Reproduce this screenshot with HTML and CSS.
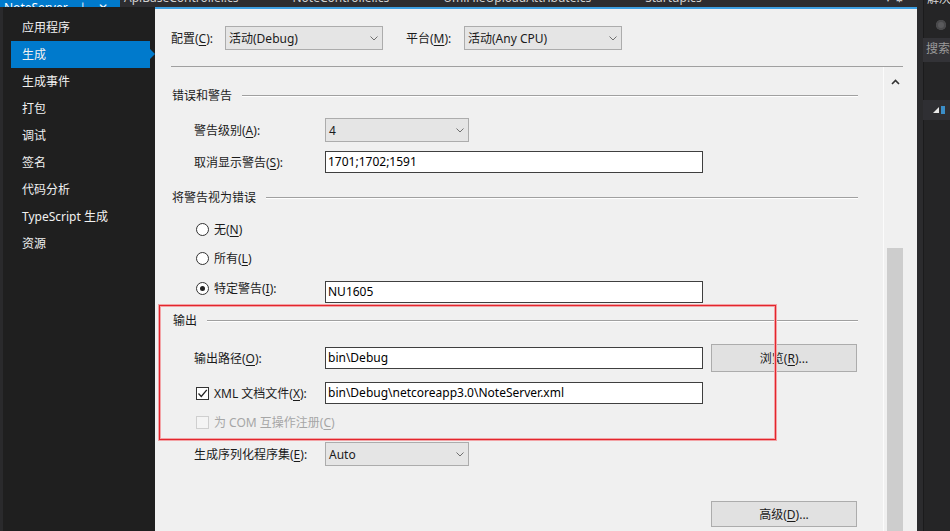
FILE: index.html
```html
<!DOCTYPE html>
<html lang="zh-CN">
<head>
  <meta charset="UTF-8">
  <title>NoteServer - 生成</title>
  <link rel="stylesheet" href="styles.css">
</head>
<body>
  <div class="ide">
    <div class="editor">
      <div class="tabs">
        <div class="tab tab-active">NoteServer <span class="tab-btn">⊥</span> <span class="tab-btn">✕</span></div>
        <div class="tab">ApiBaseController.cs</div>
        <div class="tab">NoteController.cs</div>
        <div class="tab">UmlFileUploadAttribute.cs</div>
        <div class="tab">Startup.cs</div>
        <div class="tab-tools">▾ ⚙</div>
      </div>

      <div class="doc">
        <nav class="sidebar">
          <div class="nav-item">应用程序</div>
          <div class="nav-item active">生成</div>
          <div class="nav-item">生成事件</div>
          <div class="nav-item">打包</div>
          <div class="nav-item">调试</div>
          <div class="nav-item">签名</div>
          <div class="nav-item">代码分析</div>
          <div class="nav-item">TypeScript 生成</div>
          <div class="nav-item">资源</div>
        </nav>

        <main class="props">
          <div class="config-bar">
            <span class="config-label">配置(<u>C</u>):</span>
            <div class="select wide">
              <span>活动(Debug)</span>
              <svg class="chev" width="8" height="5" viewBox="0 0 8 5"><path d="M0.5 0.5 L4 4 L7.5 0.5" fill="none" stroke="#6f6f6f"/></svg>
            </div>
            <span class="config-label platform">平台(<u>M</u>):</span>
            <div class="select wide">
              <span>活动(Any CPU)</span>
              <svg class="chev" width="8" height="5" viewBox="0 0 8 5"><path d="M0.5 0.5 L4 4 L7.5 0.5" fill="none" stroke="#6f6f6f"/></svg>
            </div>
          </div>
          <div class="config-sep"></div>

          <div class="props-body">
            <div class="form">
              <div class="group-title first"><span>错误和警告</span></div>

              <div class="row row-level">
                <label class="row-label">警告级别(<u>A</u>):</label>
                <div class="select short">
                  <span>4</span>
                  <svg class="chev" width="8" height="5" viewBox="0 0 8 5"><path d="M0.5 0.5 L4 4 L7.5 0.5" fill="none" stroke="#6f6f6f"/></svg>
                </div>
              </div>

              <div class="row row-suppress">
                <label class="row-label">取消显示警告(<u>S</u>):</label>
                <div class="textbox">1701;1702;1591</div>
              </div>

              <div class="group-title second"><span>将警告视为错误</span></div>

              <div class="row radio-row none-row">
                <span class="radio"></span><span>无(<u>N</u>)</span>
              </div>
              <div class="row radio-row all-row">
                <span class="radio"></span><span>所有(<u>L</u>)</span>
              </div>
              <div class="row specific-row">
                <label class="row-label radio-label"><span class="radio checked"></span><span>特定警告(<u>I</u>):</span></label>
                <div class="textbox">NU1605</div>
              </div>

              <div class="group-title third"><span>输出</span></div>

              <div class="row row-output">
                <label class="row-label">输出路径(<u>O</u>):</label>
                <div class="textbox">bin\Debug</div>
                <button class="btn browse">浏览(<u>R</u>)...</button>
              </div>

              <div class="row row-xml">
                <label class="row-label check-label"><span class="checkbox checked">
                  <svg width="11" height="11" viewBox="0 0 11 11"><path d="M1.5 5.5 L4.3 8.5 L9.8 1.8" fill="none" stroke="#222" stroke-width="1.3"/></svg>
                </span><span>XML 文档文件(<u>X</u>):</span></label>
                <div class="textbox">bin\Debug\netcoreapp3.0\NoteServer.xml</div>
              </div>

              <div class="row row-com disabled">
                <span class="checkbox"></span><span>为 COM 互操作注册(<u>C</u>)</span>
              </div>

              <div class="row row-serial">
                <label class="row-label">生成序列化程序集(<u>E</u>):</label>
                <div class="select short">
                  <span>Auto</span>
                  <svg class="chev" width="8" height="5" viewBox="0 0 8 5"><path d="M0.5 0.5 L4 4 L7.5 0.5" fill="none" stroke="#6f6f6f"/></svg>
                </div>
              </div>

              <div class="row row-advanced">
                <button class="btn advanced">高级(<u>D</u>)...</button>
              </div>
            </div>

            <div class="vscroll">
              <svg class="vscroll-up" width="9" height="6" viewBox="0 0 9 6"><path d="M1 5 L4.5 1.5 L8 5" fill="none" stroke="#333" stroke-width="1.6"/></svg>
              <div class="vscroll-thumb"></div>
            </div>
          </div>

          <!-- red highlight drawn over the output group -->
          <div class="annotation"></div>
        </main>
      </div>
    </div>

    <aside class="solution">
      <div class="sol-title"><span>解决方案</span></div>
      <div class="sol-toolbar"><span class="sol-icon"></span></div>
      <div class="sol-search">搜索</div>
      <div class="sol-row"><span class="sol-tri"></span><span class="sol-proj"></span></div>
    </aside>
  </div>
</body>
</html>
```

FILE: styles.css
```css
:root {
  --vs-blue: #007acc;
  --panel-bg: #f0f0f0;
  --dark-bg: #1e1e1e;
  --control-border: #acacac;
}

html, body {
  margin: 0;
  height: 100%;
}

body {
  font-family: "Noto Sans", "Noto Sans CJK SC", sans-serif;
  font-size: 12px;
  color: #1b1b1b;
  background: var(--dark-bg);
  overflow: hidden;
}

u {
  text-underline-offset: 2px;
}

.ide {
  display: flex;
  width: 950px;
  height: 531px;
}

.editor {
  width: 917px;
  display: flex;
  flex-direction: column;
}

/* tab well, mostly scrolled off the top */
.tabs {
  height: 7px;
  display: flex;
  background: #2d2d30;
  overflow: hidden;
  color: #d0d0d0;
  white-space: nowrap;
}

.tab {
  margin-top: -10px;
  line-height: 15px;
  padding: 0 4px;
  margin-right: 46px;
}

.tab-active {
  width: 120px;
  margin-right: 0;
  background: var(--vs-blue);
  color: #fff;
  padding-top: 10px;
  margin-top: 0;
  line-height: 15px;
  position: relative;
  top: -10px;
  height: 17px;
  box-sizing: border-box;
}

.tab-btn {
  margin-left: 6px;
}

.tab-tools {
  margin-left: auto;
  margin-right: 12px;
  margin-top: -10px;
  line-height: 15px;
  color: #c8c8c8;
}

.doc {
  flex: 1;
  display: flex;
}

.sidebar {
  width: 152px;
  padding-top: 7px;
  background: #1f1f1f;
  border-left: 3px solid #2a2a2c;
}

.nav-item {
  position: relative;
  width: 128px;
  margin-left: 8px;
  padding-left: 11px;
  height: 27px;
  line-height: 27px;
  color: #f1f1f1;
}

.nav-item.active {
  background: var(--vs-blue);
}

.nav-item.active::after {
  content: "";
  position: absolute;
  right: -5px;
  top: 8px;
  border-top: 5px solid transparent;
  border-bottom: 5px solid transparent;
  border-left: 5px solid var(--vs-blue);
}

.props {
  position: relative;
  flex: 1;
  display: flex;
  flex-direction: column;
  background: var(--panel-bg);
  border-top: 2px solid #3ea1e4;
}

.config-bar {
  display: flex;
  align-items: center;
  padding: 17px 0 0 16px;
}

.config-label {
  width: 54px;
}

.config-label.platform {
  width: 58px;
  margin-left: 23px;
}

.select {
  height: 24px;
  box-sizing: border-box;
  border: 1px solid var(--control-border);
  background: #e5e5e5;
  display: flex;
  align-items: center;
  justify-content: space-between;
  padding: 0 4px 0 3px;
}

.select.wide {
  width: 158px;
}

.select.short {
  width: 144px;
}

.config-sep {
  height: 1px;
  margin: 16px 14px 0 16px;
  background: #a0a0a0;
}

.props-body {
  flex: 1;
  display: flex;
  min-height: 0;
}

.form {
  width: 686px;
  padding: 0 25px 0 17px;
}

.group-title {
  display: flex;
  align-items: center;
  height: 20px;
}

.group-title::after {
  content: "";
  flex: 1;
  height: 1px;
  margin-left: 10px;
  background: #a0a0a0;
  box-shadow: 0 1px 0 #fff;
}

.group-title.first { margin-top: 18px; }
.group-title.second { margin-top: 14px; }
.group-title.third { margin-top: 7px; margin-left: 1px; }

.row {
  display: flex;
  align-items: center;
  padding-left: 22px;
}

.row-label {
  width: 131px;
  flex-shrink: 0;
}

.textbox {
  width: 378px;
  height: 22px;
  line-height: 20px;
  box-sizing: border-box;
  border: 1px solid #3f3f3f;
  background: #fff;
  padding-left: 2px;
  color: #000;
}

.row-level { margin-top: 13px; height: 24px; }
.row-suppress { margin-top: 9px; height: 22px; }

.radio-row {
  height: 20px;
  gap: 5px;
}

.none-row { margin-top: 12px; }
.all-row { margin-top: 9px; }

.radio {
  width: 13px;
  height: 13px;
  margin-left: 2px;
  box-sizing: border-box;
  border: 1px solid #333;
  border-radius: 50%;
  background: #fff;
  position: relative;
}

.radio.checked::after {
  content: "";
  position: absolute;
  left: 3px;
  top: 3px;
  width: 5px;
  height: 5px;
  border-radius: 50%;
  background: #222;
}

.specific-row {
  margin-top: 13px;
  height: 22px;
  align-items: flex-start;
}

.radio-label,
.check-label {
  display: flex;
  align-items: center;
  gap: 5px;
}

.radio-label {
  height: 14px;
  margin-top: 0;
}

.row-output { margin-top: 14px; height: 28px; }

.btn {
  font: inherit;
  color: #1b1b1b;
  width: 146px;
  margin-left: 8px;
  border: 1px solid var(--control-border);
  background: #e1e1e1;
  padding: 0;
}

.browse { height: 28px; }

.row-xml { margin-top: 10px; height: 22px; }

.checkbox {
  width: 13px;
  height: 13px;
  margin-left: 2px;
  box-sizing: border-box;
  border: 1px solid #333;
  background: #fff;
  display: flex;
  align-items: center;
  justify-content: center;
}

.row-com {
  margin-top: 8px;
  height: 20px;
  gap: 5px;
}

.disabled {
  color: #a6a6a6;
}

.disabled .checkbox {
  border-color: #cfcfcf;
  background: #f4f4f4;
}

.row-serial { margin-top: 10px; height: 24px; }

.row-advanced {
  margin-top: 35px;
  justify-content: flex-end;
  padding-right: 1px;
}

.advanced { height: 26px; }

.vscroll {
  flex: 1;
  display: flex;
  flex-direction: column;
  border-left: 1px solid #fbfbfb;
  padding-left: 3px;
}

.vscroll-up {
  margin: 12px 0 0 4px;
}

.vscroll-thumb {
  margin-top: auto;
  width: 16px;
  height: 283px;
  background: #cdcdcd;
}

.annotation {
  position: absolute;
  left: 4px;
  top: 296px;
  width: 615px;
  height: 133px;
  border: 1px solid #e3262d;
  box-shadow: 0 0 0 1px #f2a3a6, inset 0 0 0 1px #f2a3a6;
  pointer-events: none;
}

/* solution explorer, squeezed at the right edge */
.solution {
  flex: 1;
  background: #252526;
  border-left: 6px solid #2b2b2d;
  box-shadow: inset 1px 0 0 #1b1b1c;
  color: #d8d8d8;
  overflow: hidden;
  white-space: nowrap;
}

.sol-title {
  height: 7px;
  overflow: hidden;
  padding-left: 4px;
}

.sol-title span {
  display: block;
  line-height: 14px;
  margin-top: -8px;
}

.sol-toolbar {
  height: 31px;
  box-sizing: border-box;
  padding: 13px 0 0 13px;
}

.sol-icon {
  display: block;
  width: 10px;
  height: 10px;
  border-radius: 50%;
  background: #5a5a5c;
  box-shadow: inset 0 0 0 2px #4a4a4c;
}

.sol-search {
  height: 24px;
  line-height: 22px;
  padding-left: 3px;
  background: #333337;
  color: #9a9a9a;
}

.sol-row {
  margin-top: 38px;
  height: 20px;
  display: flex;
  align-items: center;
  gap: 2px;
  padding-left: 10px;
  background: #2f2f33;
}

.sol-tri {
  width: 0;
  height: 0;
  border-left: 6px solid transparent;
  border-bottom: 6px solid #e8e8e8;
}

.sol-proj {
  width: 4px;
  height: 8px;
  background: #3b8ec8;
}
```
